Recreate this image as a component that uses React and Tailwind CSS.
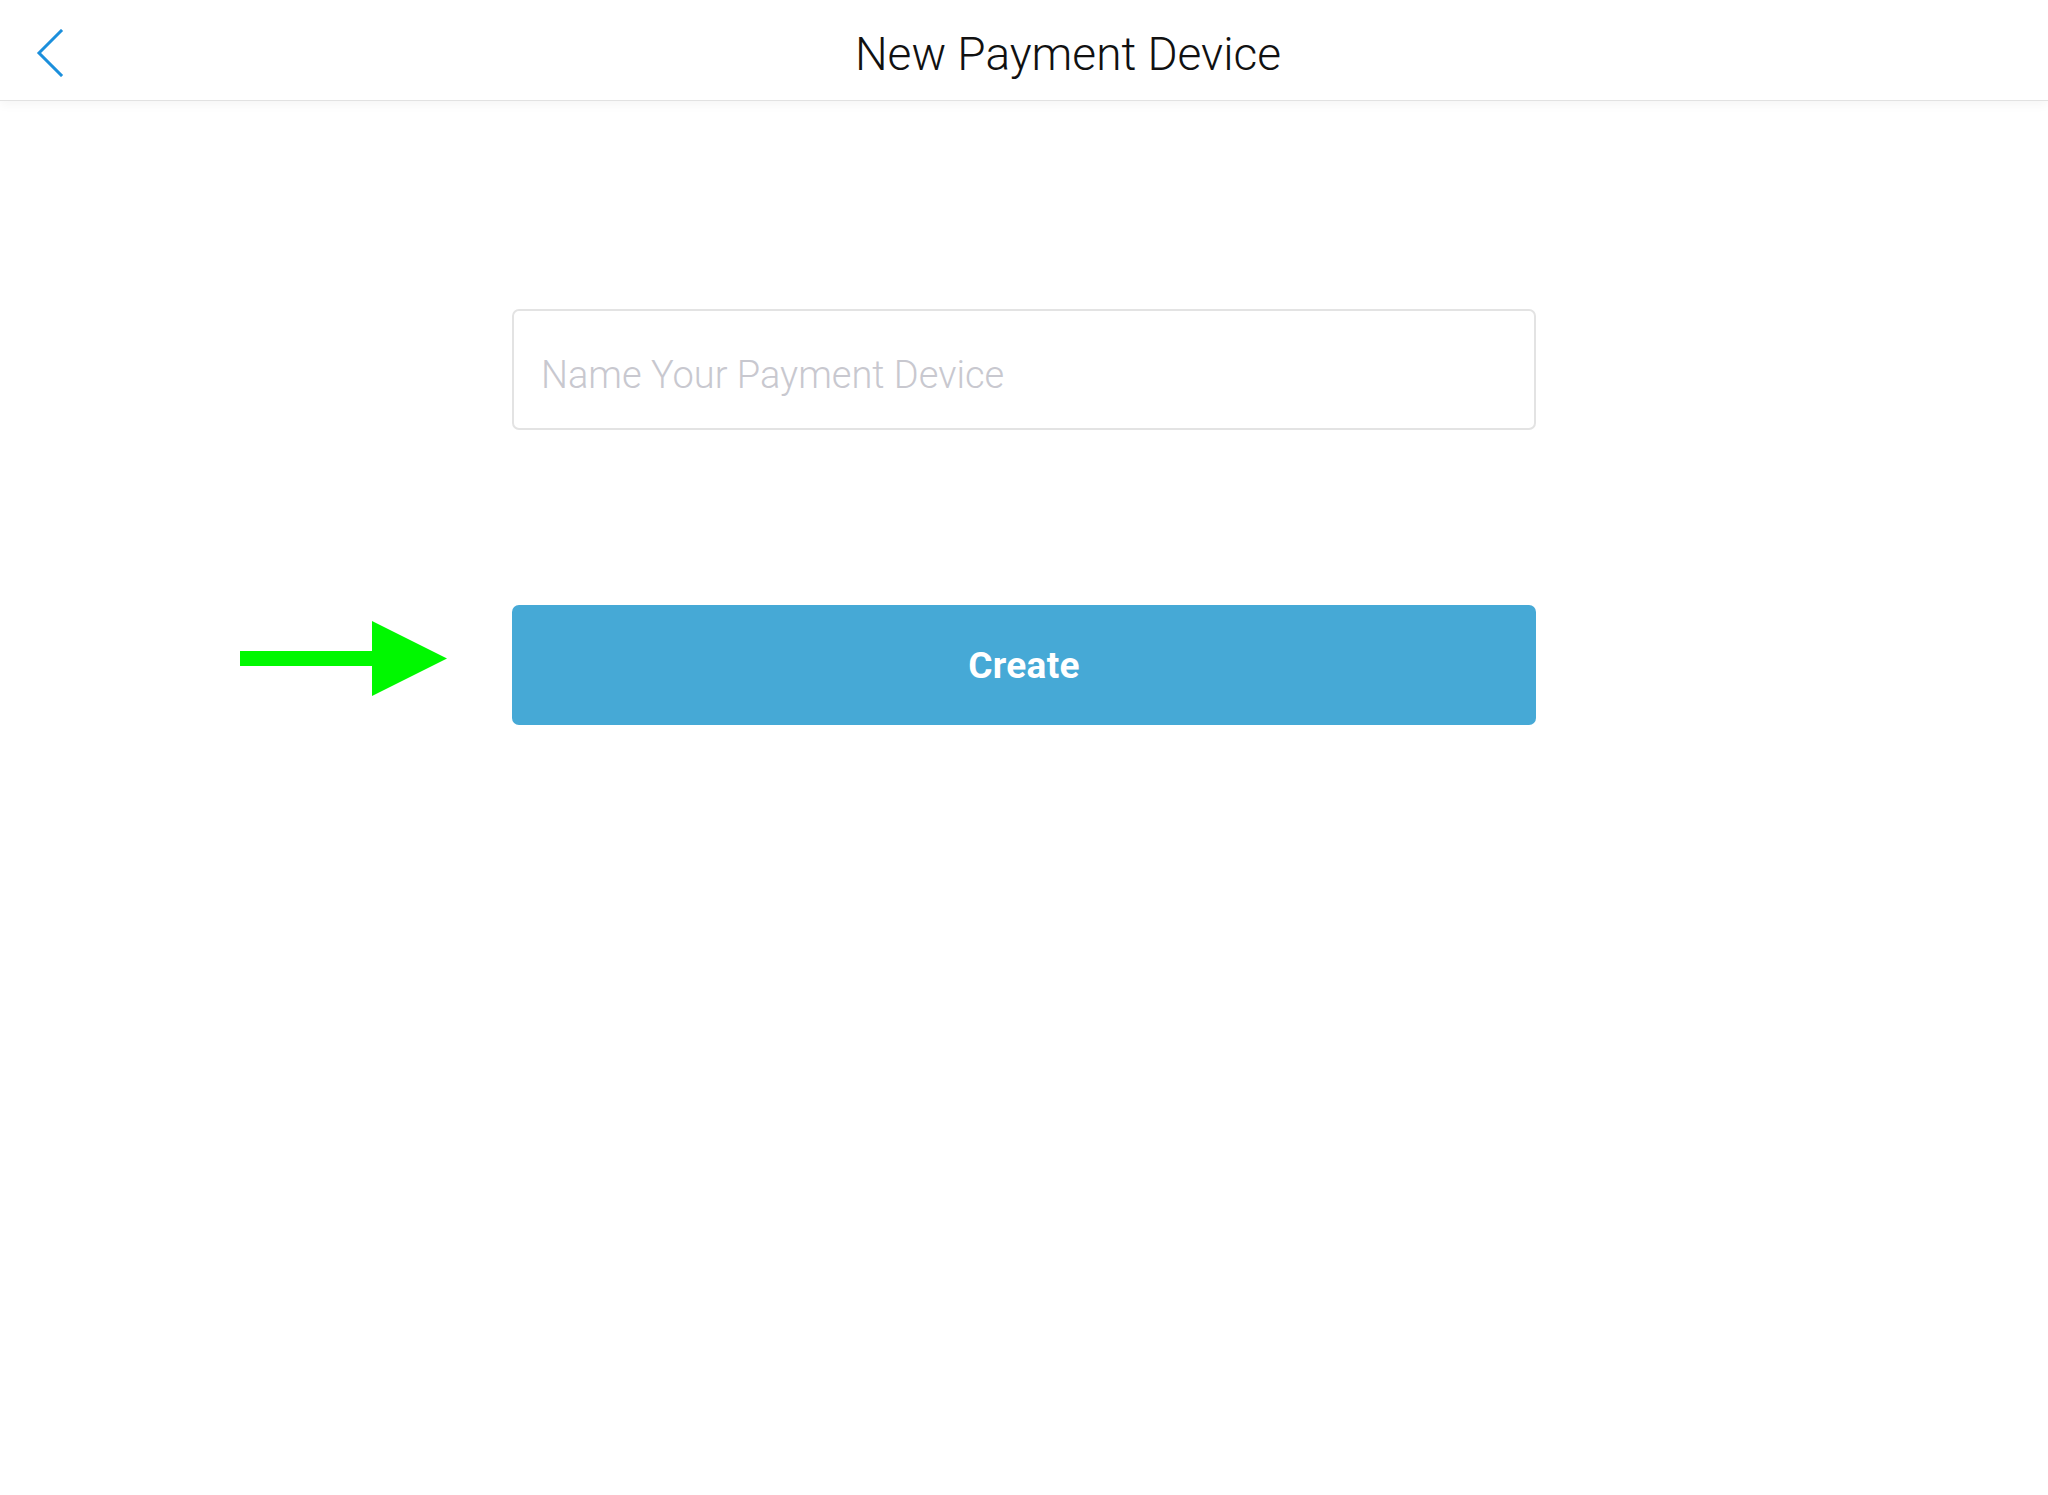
import React from "react";

export default function App() {
  return (
    <div className="w-[2048px] h-[1495px] bg-white relative" style={{ fontFamily: "Roboto, 'Liberation Sans', sans-serif" }}>
      <header className="relative h-[101px] border-b border-[#e2e2e2] shadow-[0_4px_10px_rgba(0,0,0,0.04)] flex items-center">
        <button className="absolute left-[36px] top-[29px] w-[28px] h-[48px] flex items-center justify-center">
          <svg width="28" height="48" viewBox="0 0 28 48" fill="none">
            <path d="M25 2 L3 24 L25 46" stroke="#1b8fdc" strokeWidth="3" strokeLinecap="square" strokeLinejoin="miter" />
          </svg>
        </button>
        <h1 className="w-full pl-[88px] pt-[8px] text-center text-[46px] leading-none font-light text-[#111]">
          New Payment Device
        </h1>
      </header>
      <main className="flex flex-col items-center pt-[208px]">
        <div className="w-[1024px] h-[121px] border-2 border-[#e3e3e3] rounded-[7px] flex items-center pl-[27px]">
          <input
            className="w-full outline-none bg-transparent text-[38px] font-light text-[#333] placeholder:text-[#c8c8cf] pt-[12px]"
            placeholder="Name Your Payment Device"
            style={{ fontFamily: "Roboto, 'Liberation Sans', sans-serif" }}
          />
        </div>
        <div className="relative mt-[175px]">
          <svg className="absolute left-[-272px] top-[16px]" width="208" height="76" viewBox="0 0 208 76">
            <rect x="0" y="30" width="134" height="15" fill="#00f800" />
            <polygon points="132,0 207,37.5 132,75" fill="#00f800" />
          </svg>
          <button className="w-[1024px] h-[120px] rounded-[7px] bg-[#46a9d6] text-white text-[37px] font-bold tracking-[0.3px] flex items-center justify-center pt-[2px]">
            Create
          </button>
        </div>
      </main>
    </div>
  );
}
